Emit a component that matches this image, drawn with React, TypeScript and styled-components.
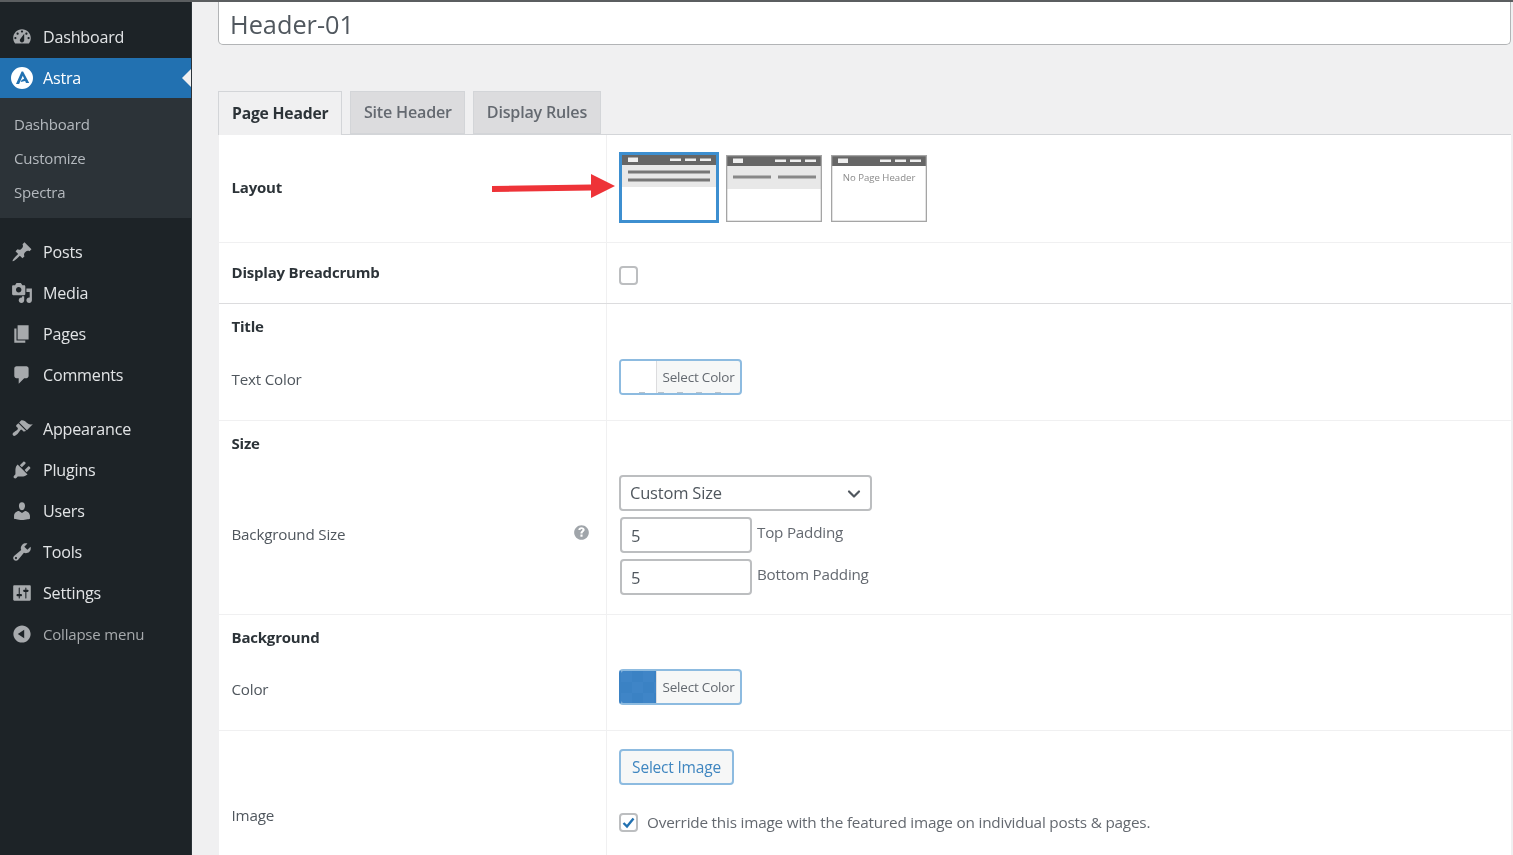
import React from "react";
import styled, { createGlobalStyle } from "styled-components";
import { ChevronDown } from "lucide-react";

const Global = createGlobalStyle`
  html, body { margin: 0; height: 100%; overflow: hidden; background: #f0f0f1; }
  body { font-family: "Open Sans", "Noto Sans", sans-serif; }
  * { box-sizing: border-box; }
`;

const Page = styled.div`
  width: 1513px;
  height: 855px;
  overflow: hidden;
  display: flex;
  border-top: 2px solid #5b5e60;
  background: #f0f0f1;
  filter: blur(0.55px);
`;

const Sidebar = styled.nav`
  width: 192px;
  flex: none;
  background: #1d2327;
  padding-top: 14px;
  display: flex;
  flex-direction: column;
  border-right: 1px solid #2c3338;
`;

const MenuItem = styled.div<{ $active?: boolean; $gap?: number; $muted?: boolean }>`
  position: relative;
  height: ${(p) => (p.$active ? 40 : 41)}px;
  flex: none;
  margin-top: ${(p) => (p.$active ? 1 : p.$gap ?? 0)}px;
  display: flex;
  align-items: center;
  gap: 10px;
  padding-left: 11px;
  font-size: ${(p) => (p.$muted ? 15 : 16.1)}px;
  letter-spacing: -0.2px;
  color: ${(p) => (p.$active ? "#ffffff" : p.$muted ? "#a7aaad" : "#e2e4e6")};
  background: ${(p) => (p.$active ? "#2271b1" : "transparent")};
  ${(p) =>
    p.$active
      ? `&::after {
          content: "";
          position: absolute;
          right: 0;
          top: 50%;
          transform: translateY(-50%);
          border: 9px solid transparent;
          border-right-color: #f0f0f1;
          border-left-width: 0;
        }`
      : ""}
`;

const MenuIcon = styled.svg<{ $active?: boolean }>`
  width: 22px;
  height: 22px;
  flex: none;
  fill: ${(p) => (p.$active ? "#ffffff" : "#a7aaad")};
`;

const Submenu = styled.div`
  background: #2c3338;
  height: 120px;
  flex: none;
  padding-top: 9px;
  display: flex;
  flex-direction: column;
`;

const SubItem = styled.div`
  height: 34px;
  flex: none;
  display: flex;
  align-items: center;
  padding-left: 14px;
  font-size: 15px;
  letter-spacing: -0.2px;
  color: #b4b9be;
`;

const Main = styled.main`
  flex: 1;
  min-width: 0;
  padding: 0 2px 0 26px;
  display: flex;
  flex-direction: column;
`;

const TitleInput = styled.input`
  width: 100%;
  height: 43px;
  flex: none;
  border: 1.5px solid #b2b4b6;
  border-top: 0;
  border-radius: 0 0 5px 5px;
  background: #fff;
  padding: 2px 11px 0;
  font: 400 25.3px "Open Sans", sans-serif;
  color: #50575e;
  outline: none;
`;

const Tabs = styled.div`
  margin-top: 46px;
  height: 43px;
  flex: none;
  display: flex;
  gap: 8px;
  position: relative;
  z-index: 1;
`;

const Tab = styled.div<{ $active?: boolean }>`
  height: ${(p) => (p.$active ? 44 : 43)}px;
  padding: 0 ${(p) => (p.$active ? 13 : 12.5)}px 2px;
  display: flex;
  align-items: center;
  font-size: ${(p) => (p.$active ? 15.7 : 16.1)}px;
  letter-spacing: -0.2px;
  font-weight: ${(p) => (p.$active ? 700 : 600)};
  color: ${(p) => (p.$active ? "#2c3338" : "#646970")};
  background: ${(p) => (p.$active ? "#f0f0f1" : "#dcdcde")};
  border: 1px solid #d3d5d8;
  border-bottom: ${(p) => (p.$active ? "0" : "1px solid #d3d5d8")};
`;

const Panel = styled.div`
  flex: 1;
  min-height: 0;
  margin-left: 1px;
  background: #fff;
  border-top: 1px solid #d3d5d8;
`;

const Row = styled.div<{ $h: number; $line?: "none" | "soft" | "hard" }>`
  height: ${(p) => p.$h}px;
  display: grid;
  grid-template-columns: 387px 1fr;
  border-bottom: ${(p) =>
    p.$line === "none" ? "0" : p.$line === "hard" ? "1px solid #dcdcde" : "1px solid #f0f0f1"};
`;

const LabelCell = styled.div<{ $top?: number; $strong?: boolean; $lift?: number }>`
  padding: ${(p) => p.$top ?? 0}px 12px ${(p) => p.$lift ?? 0}px 12.5px;
  ${(p) => (p.$top === undefined ? "display: flex; align-items: center;" : "")}
  font-size: ${(p) => (p.$strong ? 15 : 15.2)}px;
  line-height: 20px;
  letter-spacing: -0.2px;
  font-weight: ${(p) => (p.$strong ? 700 : 400)};
  color: ${(p) => (p.$strong ? "#2c3338" : "#50575e")};
  position: relative;
`;

const HelpIcon = styled.svg`
  position: absolute;
  right: 14px;
  top: 55px;
  width: 21px;
  height: 21px;
  fill: #a0a5aa;
`;

const FieldCell = styled.div<{ $align?: boolean; $pad?: number }>`
  border-left: 1px solid #f0f0f1;
  padding: ${(p) => p.$pad ?? 9}px 12px 9px;
  display: flex;
  flex-direction: column;
  align-items: flex-start;
  ${(p) => (p.$align ? "justify-content: center;" : "")}
`;

const LayoutCell = styled(FieldCell)`
  position: relative;
  flex-direction: row;
  align-items: center;
  padding: 0 12px 2px;
  gap: 7px;
`;

const RedArrow = styled.svg`
  position: absolute;
  left: -116px;
  top: 39px;
  width: 126px;
  height: 26px;
`;

const LayoutThumb = styled.svg<{ $selected?: boolean; $shift?: number }>`
  display: block;
  flex: none;
  margin-left: ${(p) => p.$shift ?? 0}px;
  margin-top: ${(p) => (p.$selected ? 0 : 2)}px;
  width: ${(p) => (p.$selected ? 100 : 96)}px;
  height: ${(p) => (p.$selected ? 71 : 67)}px;
`;

const Check = styled.span<{ $nudge?: number }>`
  width: 19px;
  height: 19px;
  flex: none;
  margin-top: ${(p) => p.$nudge ?? 0}px;
  border: 2px solid #bcbec0;
  border-radius: 4px;
  background: #fff;
  display: inline-flex;
  align-items: center;
  justify-content: center;
`;

const ColorButton = styled.div<{ $filled?: boolean }>`
  position: relative;
  width: 123px;
  height: 36px;
  display: flex;
  border: 2px solid #8dbbe0;
  ${(p) => (p.$filled ? "border-left-color: #3b82c4;" : "")}
  border-radius: 4px;
  overflow: hidden;
  background: #f6f7f7;
`;

const Swatch = styled.span<{ $blue?: boolean }>`
  width: 36px;
  flex: none;
  border-right: 1px solid #dcdcde;
  background: ${(p) =>
    p.$blue
      ? `repeating-conic-gradient(#3b82c4 0 25%, #3f85c7 0 50%) 0 0 / 22px 22px`
      : "#fff"};
`;

const ColorLabel = styled.span`
  flex: 1;
  display: flex;
  align-items: center;
  justify-content: center;
  font-size: 13.5px;
  letter-spacing: -0.2px;
  color: #646970;
`;

const Dashes = styled.span`
  position: absolute;
  left: 18px;
  right: 6px;
  bottom: 0;
  height: 1px;
  background: repeating-linear-gradient(90deg, #b9c3cc 0 6px, transparent 6px 19px);
`;

const SelectWrap = styled.div`
  position: relative;
  width: 253px;
  height: 36px;
`;

const SizeSelect = styled.select`
  width: 100%;
  height: 100%;
  appearance: none;
  border: 2px solid #bcbec0;
  border-radius: 4px;
  background: #fff;
  padding: 0 9px 2px;
  font: 400 16.5px "Open Sans", sans-serif;
  letter-spacing: -0.2px;
  color: #50575e;
`;

const Chevron = styled(ChevronDown)`
  position: absolute;
  right: 8px;
  top: 9px;
  width: 20px;
  height: 20px;
  color: #50575e;
  stroke-width: 2.6;
  pointer-events: none;
`;

const PaddingRow = styled.div`
  display: flex;
  align-items: flex-start;
  gap: 5px;
  margin-top: 6px;
  padding-left: 1px;
`;

const NumberInput = styled.input`
  width: 132px;
  height: 36px;
  border: 2px solid #bcbec0;
  border-radius: 4px;
  background: #fff;
  padding: 0 9px;
  font: 400 16.5px "Open Sans", sans-serif;
  color: #50575e;
  outline: none;
`;

const PaddingLabel = styled.span`
  font-size: 15.2px;
  letter-spacing: -0.2px;
  line-height: 20px;
  margin-top: 5px;
  color: #646970;
`;

const ImageButton = styled.div`
  width: 115px;
  height: 36px;
  display: flex;
  align-items: center;
  justify-content: center;
  border: 2px solid #8dbbe0;
  border-radius: 4px;
  background: #f6f7f7;
  font-size: 15.5px;
  letter-spacing: -0.2px;
  color: #3f86c0;
`;

const OverrideLine = styled.label`
  margin-top: 27px;
  display: flex;
  align-items: center;
  gap: 9px;
  font-size: 15.3px;
  letter-spacing: -0.2px;
  color: #646970;
`;

const icons: Record<string, string> = {
  dashboard:
    "M3.76 16h12.48c1.1-1.37 1.76-3.11 1.76-5 0-4.42-3.58-8-8-8s-8 3.58-8 8c0 1.89.66 3.63 1.76 5zM10 4c.55 0 1 .45 1 1s-.45 1-1 1-1-.45-1-1 .45-1 1-1zM6 6c.55 0 1 .45 1 1s-.45 1-1 1-1-.45-1-1 .45-1 1-1zm8 0c.55 0 1 .45 1 1s-.45 1-1 1-1-.45-1-1 .45-1 1-1zm-5.37 5.55L12 7v6c0 1.1-.9 2-2 2s-2-.9-2-2c0-.57.24-1.08.63-1.45zM4 10c.55 0 1 .45 1 1s-.45 1-1 1-1-.45-1-1 .45-1 1-1zm12 0c.55 0 1 .45 1 1s-.45 1-1 1-1-.45-1-1 .45-1 1-1z",
  posts:
    "M10.44 3.02l1.82-1.82 6.36 6.35-1.83 1.82c-1.05-.68-2.48-.57-3.41.36l-.75.75c-.92.93-1.04 2.35-.35 3.41l-1.83 1.82-2.41-2.41-2.8 2.79c-.42.42-3.38 2.71-3.8 2.29s1.86-3.39 2.28-3.81l2.79-2.79L4.1 9.36l1.83-1.82c1.05.69 2.48.57 3.4-.36l.75-.75c.93-.92 1.05-2.35.36-3.41z",
  media:
    "M13 11V4c0-.55-.45-1-1-1h-1.67L9 1H5L3.67 3H2c-.55 0-1 .45-1 1v7c0 .55.45 1 1 1h10c.55 0 1-.45 1-1zM7 4.5c1.38 0 2.5 1.12 2.5 2.5S8.38 9.5 7 9.5 4.5 8.38 4.5 7 5.62 4.5 7 4.5zM14 6h5v10.5c0 1.38-1.12 2.5-2.5 2.5S14 17.88 14 16.5s1.12-2.5 2.5-2.5c.17 0 .34.02.5.05V9h-3V6zm-4 8.05V13h2v3.5c0 1.38-1.12 2.5-2.5 2.5S7 17.88 7 16.5 8.12 14 9.5 14c.17 0 .34.02.5.05z",
  pages: "M6 15V2h10v13H6zm-1 1h8v2H3V5h2v11z",
  comments:
    "M5 2h9c1.1 0 2 .9 2 2v7c0 1.1-.9 2-2 2h-2l-5 5v-5H5c-1.1 0-2-.9-2-2V4c0-1.1.9-2 2-2z",
  appearance:
    "M14.48 11.06L7.41 3.99l1.5-1.5c.5-.56 2.3-.47 3.51.32 1.21.8 1.43 1.28 2.91 2.1 1.18.64 2.45 1.26 4.45.85zm-.71.71L6.7 4.7 4.93 6.47c-.39.39-.39 1.02 0 1.41l1.06 1.06c.39.39.39 1.03 0 1.42-.6.6-1.43 1.11-2.21 1.69-.35.26-.7.53-1.01.84C1.43 13.23.99 15.08 2 16s2.77-.43 4.11-1.77c.31-.31.58-.66.84-1.01.58-.78 1.09-1.61 1.69-2.21.39-.39 1.03-.39 1.42 0l1.06 1.06c.39.39 1.02.39 1.41 0z",
  plugins:
    "M13.11 4.36L9.87 7.6 8 5.73l3.24-3.24c.35-.34 1.05-.2 1.56.32.52.51.66 1.21.31 1.55zm-8 1.77l.91-1.12 9.01 9.01-1.19.84c-.71.71-2.63 1.16-3.82 1.16H6.14L4.9 17.26c-.59.59-1.54.59-2.12 0-.59-.58-.59-1.53 0-2.12l1.24-1.24v-3.88c0-1.13.4-3.19 1.09-3.89zm7.26 3.97l3.24-3.24c.34-.35 1.04-.21 1.55.31.52.51.66 1.21.31 1.55l-3.24 3.25z",
  users:
    "M10 9.25c-2.27 0-2.73-3.44-2.73-3.44C7 4.02 7.82 2 9.97 2c2.16 0 2.98 2.02 2.71 3.81 0 0-.41 3.44-2.68 3.44zm0 2.57L12.72 10c2.39 0 4.52 2.33 4.52 4.53v2.49s-3.65 1.13-7.24 1.13c-3.65 0-7.24-1.13-7.24-1.13v-2.49c0-2.25 1.94-4.48 4.47-4.48z",
  tools:
    "M16.68 9.77c-1.34 1.34-3.3 1.67-4.95.99l-5.41 6.52c-.99.99-2.59.99-3.58 0s-.99-2.59 0-3.57l6.52-5.42c-.68-1.65-.35-3.61.99-4.95 1.28-1.28 3.12-1.62 4.72-1.06l-2.89 2.89 2.82 2.82 2.86-2.87c.53 1.58.18 3.39-1.08 4.65zM3.81 16.21c.4.39 1.04.39 1.43 0 .4-.4.4-1.04 0-1.43-.39-.4-1.03-.4-1.43 0-.39.39-.39 1.03 0 1.43z",
  settings:
    "M18 16V4c0-.55-.45-1-1-1H3c-.55 0-1 .45-1 1v12c0 .55.45 1 1 1h14c.55 0 1-.45 1-1zM8 11h1c.55 0 1 .45 1 1s-.45 1-1 1H8v1.5c0 .28-.22.5-.5.5s-.5-.22-.5-.5V13H6c-.55 0-1-.45-1-1s.45-1 1-1h1V5.5c0-.28.22-.5.5-.5s.5.22.5.5V11zm5-2h-1c-.55 0-1-.45-1-1s.45-1 1-1h1V5.5c0-.28.22-.5.5-.5s.5.22.5.5V7h1c.55 0 1 .45 1 1s-.45 1-1 1h-1v5.5c0 .28-.22.5-.5.5s-.5-.22-.5-.5V9z",
  collapse:
    "M10 2.16c4.33 0 7.84 3.51 7.84 7.84s-3.51 7.84-7.84 7.84S2.16 14.33 2.16 10 5.71 2.16 10 2.16zm2 11.72V6.12L6.18 9.97z",
};

const Icon = ({ name }: { name: string }) => (
  <MenuIcon viewBox="0 0 20 20">
    <path fillRule="evenodd" d={icons[name]} />
  </MenuIcon>
);

const AstraIcon = () => (
  <MenuIcon viewBox="0 0 22 22" $active>
    <path
      fillRule="evenodd"
      d="M11 0a11 11 0 1 1 0 22a11 11 0 0 1 0-22zM10.6 4.5L5 17h3.1l3.7-8.2 1.3 2.9-2.5 1.2-.9 2.1 4.4-.9.9 1.9h3.2L12.1 4.5z"
    />
  </MenuIcon>
);

const ThumbFrame = ({
  selected,
  shift,
  children,
}: {
  selected?: boolean;
  shift?: number;
  children?: React.ReactNode;
}) => (
  <LayoutThumb $selected={selected} $shift={shift} viewBox={selected ? "-2 -2 100 71" : "0 0 96 67"}>
    <rect x="0.5" y="0.5" width="95" height="66" fill="#fff" />
    {children}
    <rect x="0" y="0" width="96" height="11" fill="#666" />
    <rect x="7" y="3.5" width="10" height="4.5" fill="#eee" />
    <rect x="49" y="4.5" width="11" height="2.5" fill="#eee" />
    <rect x="64" y="4.5" width="11" height="2.5" fill="#eee" />
    <rect x="79" y="4.5" width="11" height="2.5" fill="#eee" />
    <rect
      x={selected ? -0.5 : 0.5}
      y={selected ? -0.5 : 0.5}
      width={selected ? 97 : 95}
      height={selected ? 68 : 66}
      fill="none"
      stroke={selected ? "#3d8fd0" : "#a5a5a5"}
      strokeWidth={selected ? 3 : 1.6}
    />
  </LayoutThumb>
);

export default function App() {
  return (
    <>
      <Global />
      <Page>
        <Sidebar>
          <MenuItem><Icon name="dashboard" />Dashboard</MenuItem>
          <MenuItem $active><AstraIcon />Astra</MenuItem>
          <Submenu>
            <SubItem>Dashboard</SubItem>
            <SubItem>Customize</SubItem>
            <SubItem>Spectra</SubItem>
          </Submenu>
          <MenuItem $gap={13}><Icon name="posts" />Posts</MenuItem>
          <MenuItem><Icon name="media" />Media</MenuItem>
          <MenuItem><Icon name="pages" />Pages</MenuItem>
          <MenuItem><Icon name="comments" />Comments</MenuItem>
          <MenuItem $gap={13}><Icon name="appearance" />Appearance</MenuItem>
          <MenuItem><Icon name="plugins" />Plugins</MenuItem>
          <MenuItem><Icon name="users" />Users</MenuItem>
          <MenuItem><Icon name="tools" />Tools</MenuItem>
          <MenuItem><Icon name="settings" />Settings</MenuItem>
          <MenuItem $muted><Icon name="collapse" />Collapse menu</MenuItem>
        </Sidebar>
        <Main>
          <TitleInput readOnly value="Header-01" />
          <Tabs>
            <Tab $active>Page Header</Tab>
            <Tab>Site Header</Tab>
            <Tab>Display Rules</Tab>
          </Tabs>
          <Panel>
            <Row $h={108}>
              <LabelCell $strong $lift={4}>Layout</LabelCell>
              <LayoutCell>
                <RedArrow viewBox="0 0 126 26">
                  <path d="M1 12 L100 10.5 L100 0 L124 12 L100 24 L100 16.5 L1 18 Z" fill="#ee3338" />
                </RedArrow>
                <ThumbFrame selected>
                  <rect x="0" y="11" width="96" height="22" fill="#e8e8e8" />
                  <rect x="7" y="16.5" width="82" height="3" fill="#777" />
                  <rect x="7" y="24.5" width="82" height="3" fill="#777" />
                </ThumbFrame>
                <ThumbFrame>
                  <rect x="0" y="11" width="96" height="23" fill="#e8e8e8" />
                  <rect x="7" y="20.5" width="38" height="3" fill="#888" />
                  <rect x="52" y="20.5" width="38" height="3" fill="#888" />
                </ThumbFrame>
                <ThumbFrame shift={2}>
                  <text x="48" y="26" textAnchor="middle" fontSize="9.6" fontFamily="Open Sans, sans-serif" fill="#8a8a8a">No Page Header</text>
                </ThumbFrame>
              </LayoutCell>
            </Row>
            <Row $h={61} $line="hard">
              <LabelCell $strong $lift={2}>Display Breadcrumb</LabelCell>
              <FieldCell $align><Check $nudge={5} /></FieldCell>
            </Row>
            <Row $h={46} $line="none">
              <LabelCell $strong $top={12}>Title</LabelCell>
              <FieldCell />
            </Row>
            <Row $h={71}>
              <LabelCell $top={19}>Text Color</LabelCell>
              <FieldCell>
                <ColorButton>
                  <Swatch />
                  <ColorLabel>Select Color</ColorLabel>
                  <Dashes />
                </ColorButton>
              </FieldCell>
            </Row>
            <Row $h={46} $line="none">
              <LabelCell $strong $top={12}>Size</LabelCell>
              <FieldCell />
            </Row>
            <Row $h={148}>
              <LabelCell $top={57}>
                Background Size
                <HelpIcon viewBox="0 0 20 20">
                  <path
                    fillRule="evenodd"
                    d="M17 10c0-3.87-3.14-7-7-7-3.87 0-7 3.13-7 7 0 3.86 3.13 7 7 7 3.86 0 7-3.14 7-7zm-6 4H9v-2h2v2zm1.75-5.59c-.15.34-.56.78-1 1.13-.25.2-.45.41-.6.62-.12.18-.15.34-.15.34V11H9v-.5c0-.5.2-.9.46-1.25.2-.28.5-.55.8-.8.45-.35.74-.66.74-1 0-.5-.4-.9-1-.9s-1 .4-1 1H7c0-1.6 1.3-2.5 3-2.5 1.7 0 3 .9 3 2.4 0 .35-.1.68-.25.96z"
                  />
                </HelpIcon>
              </LabelCell>
              <FieldCell $pad={8}>
                <SelectWrap>
                  <SizeSelect defaultValue="custom">
                    <option value="custom">Custom Size</option>
                  </SizeSelect>
                  <Chevron />
                </SelectWrap>
                <PaddingRow>
                  <NumberInput readOnly value="5" />
                  <PaddingLabel>Top Padding</PaddingLabel>
                </PaddingRow>
                <PaddingRow>
                  <NumberInput readOnly value="5" />
                  <PaddingLabel>Bottom Padding</PaddingLabel>
                </PaddingRow>
              </FieldCell>
            </Row>
            <Row $h={46} $line="none">
              <LabelCell $strong $top={12}>Background</LabelCell>
              <FieldCell />
            </Row>
            <Row $h={70}>
              <LabelCell $top={18}>Color</LabelCell>
              <FieldCell $pad={8}>
                <ColorButton $filled>
                  <Swatch $blue />
                  <ColorLabel>Select Color</ColorLabel>
                </ColorButton>
              </FieldCell>
            </Row>
            <Row $h={170} $line="none">
              <LabelCell $top={74}>Image</LabelCell>
              <FieldCell $pad={18}>
                <ImageButton>Select Image</ImageButton>
                <OverrideLine>
                  <Check>
                    <svg width="15" height="15" viewBox="0 0 15 15">
                      <path d="M2.5 8 L6 11.5 L12.5 3.5" fill="none" stroke="#2271b1" strokeWidth="2.4" />
                    </svg>
                  </Check>
                  Override this image with the featured image on individual posts &amp; pages.
                </OverrideLine>
              </FieldCell>
            </Row>
          </Panel>
        </Main>
      </Page>
    </>
  );
}
